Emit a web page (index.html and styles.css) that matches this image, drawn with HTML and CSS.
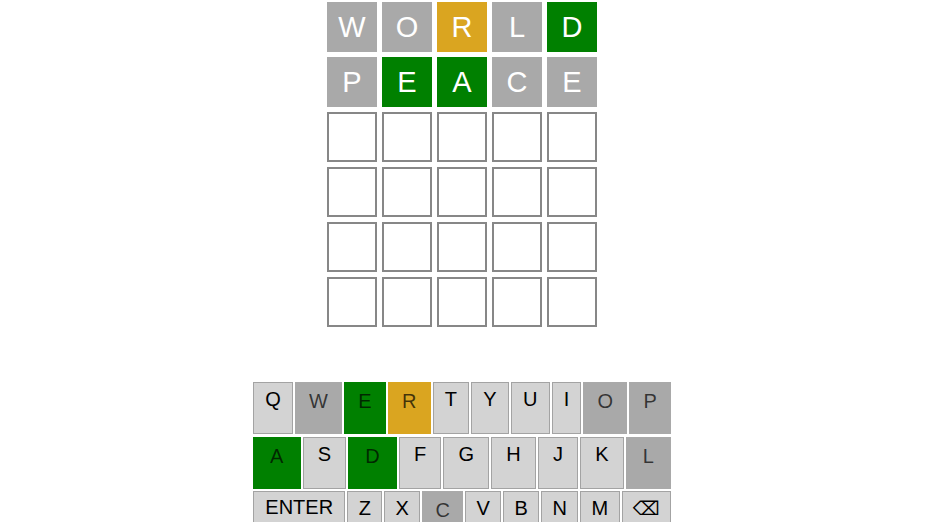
FILE: index.html
```html
<!DOCTYPE html>
<html lang="en">
<head>
<meta charset="utf-8">
<title>Wordle</title>
<link rel="stylesheet" href="styles.css">
</head>
<body>
<main class="app">
  <section class="board">
    <div class="tile absent">W</div>
    <div class="tile absent">O</div>
    <div class="tile present">R</div>
    <div class="tile absent">L</div>
    <div class="tile correct">D</div>
    <div class="tile absent">P</div>
    <div class="tile correct">E</div>
    <div class="tile correct">A</div>
    <div class="tile absent">C</div>
    <div class="tile absent">E</div>
    <div class="tile empty"></div><div class="tile empty"></div><div class="tile empty"></div><div class="tile empty"></div><div class="tile empty"></div>
    <div class="tile empty"></div><div class="tile empty"></div><div class="tile empty"></div><div class="tile empty"></div><div class="tile empty"></div>
    <div class="tile empty"></div><div class="tile empty"></div><div class="tile empty"></div><div class="tile empty"></div><div class="tile empty"></div>
    <div class="tile empty"></div><div class="tile empty"></div><div class="tile empty"></div><div class="tile empty"></div><div class="tile empty"></div>
  </section>
  <section class="keyboard">
    <div class="krow">
      <div class="key">Q</div>
      <div class="key k-absent">W</div>
      <div class="key k-correct">E</div>
      <div class="key k-present">R</div>
      <div class="key">T</div>
      <div class="key">Y</div>
      <div class="key">U</div>
      <div class="key">I</div>
      <div class="key k-absent">O</div>
      <div class="key k-absent">P</div>
    </div>
    <div class="krow">
      <div class="key k-correct">A</div>
      <div class="key">S</div>
      <div class="key k-correct">D</div>
      <div class="key">F</div>
      <div class="key">G</div>
      <div class="key">H</div>
      <div class="key">J</div>
      <div class="key">K</div>
      <div class="key k-absent">L</div>
    </div>
    <div class="krow">
      <div class="key enter">ENTER</div>
      <div class="key">Z</div>
      <div class="key">X</div>
      <div class="key k-absent">C</div>
      <div class="key">V</div>
      <div class="key">B</div>
      <div class="key">N</div>
      <div class="key">M</div>
      <div class="key back">⌫</div>
    </div>
  </section>
</main>
</body>
</html>
```

FILE: styles.css
```css
html, body {
  margin: 0;
  padding: 0;
  background: #ffffff;
  overflow: hidden;
}

body {
  font-family: "Liberation Sans", Arial, "DejaVu Sans", sans-serif;
}

.app {
  display: flex;
  flex-direction: column;
  align-items: center;
  padding: 2px 4px 0 0;
}

.board {
  display: grid;
  grid-template-columns: repeat(5, 50px);
  grid-auto-rows: 50px;
  gap: 5px;
}

.tile {
  box-sizing: border-box;
  display: flex;
  align-items: center;
  justify-content: center;
  color: #ffffff;
  font-size: 29px;
  line-height: 1;
}

.tile.absent { background: #a9a9a9; }
.tile.present { background: #daa520; }
.tile.correct { background: #008000; }
.tile.empty { border: 2px solid #878787; background: #fff; }

.keyboard {
  width: 418px;
  margin-top: 55px;
  display: flex;
  flex-direction: column;
  gap: 2.5px;
}

.krow {
  display: flex;
  gap: 2px;
  height: 52px;
}

.key {
  box-sizing: border-box;
  flex: 1 1 auto;
  background: #d3d3d3;
  border: 1px solid #a3a3a3;
  padding: 5px 10px 0;
  font-size: 20px;
  line-height: 23px;
  text-align: center;
  color: #000;
  white-space: nowrap;
}

.key.enter {
  padding: 4px 11px 0;
}

.key.k-absent,
.key.k-correct,
.key.k-present {
  padding: 7px 12px 0;
  color: rgba(0, 0, 0, 0.7);
}

.key.k-absent { background: #a9a9a9; border-color: #a9a9a9; }
.key.k-correct { background: #008000; border-color: #008000; }
.key.k-present { background: #daa520; border-color: #daa520; }

.key.back {
  font-family: "DejaVu Sans", sans-serif;
  font-size: 19px;
}
```
